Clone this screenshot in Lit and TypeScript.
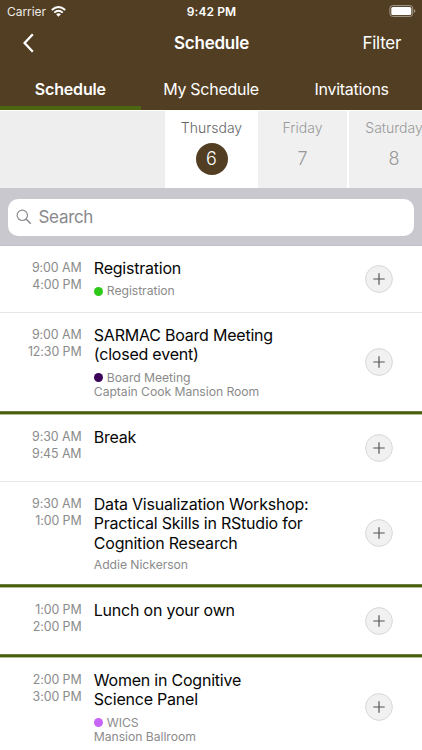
import { LitElement, html, css, nothing } from "lit";
import { customElement, property } from "lit/decorators.js";

interface Session {
  start: string;
  end: string;
  title: string[];
  color?: string;
  category?: string;
  note?: string;
  blockEnd?: boolean;
}

const SESSIONS: Session[] = [
  { start: "9:00 AM", end: "4:00 PM", title: ["Registration"], color: "#2dc81a", category: "Registration" },
  {
    start: "9:00 AM",
    end: "12:30 PM",
    title: ["SARMAC Board Meeting", "(closed event)"],
    color: "#3b0458",
    category: "Board Meeting",
    note: "Captain Cook Mansion Room",
    blockEnd: true,
  },
  { start: "9:30 AM", end: "9:45 AM", title: ["Break"] },
  {
    start: "9:30 AM",
    end: "1:00 PM",
    title: ["Data Visualization Workshop:", "Practical Skills in RStudio for", "Cognition Research"],
    note: "Addie Nickerson",
    blockEnd: true,
  },
  { start: "1:00 PM", end: "2:00 PM", title: ["Lunch on your own"], blockEnd: true },
  {
    start: "2:00 PM",
    end: "3:00 PM",
    title: ["Women in Cognitive", "Science Panel"],
    color: "#c964f8",
    category: "WICS",
    note: "Mansion Ballroom",
  },
];

@customElement("session-row")
class SessionRow extends LitElement {
  @property({ attribute: false }) session!: Session;

  static styles = css`
    :host { display: block; flex: none; }
    .row {
      display: grid;
      grid-template-columns: 81.5px 1fr 86px;
      min-height: 66px;
    }
    .rule { height: 1px; background: #e6e6e8; }
    .rule.end {
      height: 4px;
      background: linear-gradient(#6c7f3c 1px, #4a5e10 1px 3px, #b3c095 3px);
    }
    .times {
      color: #8b8b8b;
      font-size: 12.4px;
      line-height: 16.7px;
      letter-spacing: -0.08px;
      text-align: right;
      padding-top: 14px;
      white-space: nowrap;
    }
    .info { padding: 13px 0 12px 12.3px; }
    .title {
      color: #060606;
      font-size: 16px;
      line-height: 19.4px;
      letter-spacing: -0.22px;
      white-space: nowrap;
    }
    .meta {
      color: #8b8b8b;
      font-size: 12.2px;
      line-height: 13.8px;
      letter-spacing: -0.05px;
      margin-top: 5px;
      white-space: nowrap;
    }
    .meta.tagged { margin: 6px 0 0.6px; }
    .category { display: flex; align-items: center; gap: 4px; }
    .dot { width: 9px; height: 9px; border-radius: 50%; }
    .action { display: flex; align-items: center; justify-content: center; }
    .add { display: block; width: 28px; height: 28px; }
  `;

  render() {
    const s = this.session;
    return html`
      <div class="row">
        <div class="times"><div>${s.start}</div><div>${s.end}</div></div>
        <div class="info">
          <div class="title">${s.title.map((t) => html`<div>${t}</div>`)}</div>
          ${s.category || s.note
            ? html`<div class="meta ${s.category ? "tagged" : ""}">
                ${s.category
                  ? html`<div class="category"><span class="dot" style="background:${s.color}"></span><span>${s.category}</span></div>`
                  : nothing}
                ${s.note ? html`<div>${s.note}</div>` : nothing}
              </div>`
            : nothing}
        </div>
        <div class="action">
          <svg class="add" viewBox="0 0 28 28">
            <circle cx="14" cy="14" r="13.4" fill="#f1f1f1" stroke="#d8d8d8" stroke-width="1" />
            <path d="M8.3 14H19.7M14 8.3V19.7" stroke="#555" stroke-width="1.2" fill="none" />
          </svg>
        </div>
      </div>
      <div class="rule ${s.blockEnd ? "end" : ""}"></div>
    `;
  }
}

@customElement("app-root")
class AppRoot extends LitElement {
  static styles = css`
    :host {
      display: flex;
      flex-direction: column;
      width: 422px;
      height: 750px;
      overflow: hidden;
      background: #fff;
      font-family: Inter, "Liberation Sans", sans-serif;
    }
    .top { background: #523e23; color: #fff; height: 110px; flex: none; display: flex; flex-direction: column; }
    .status { height: 22px; display: grid; grid-template-columns: 1fr auto 1fr; align-items: center; padding: 0 6px 0 7px; font-size: 12px; box-sizing: border-box; }
    .carrier { display: flex; align-items: center; gap: 5px; color: #eeebe7; letter-spacing: -0.05px; }
    .wifi { width: 15px; height: 11px; }
    .clock { font-weight: 600; font-size: 12px; letter-spacing: 0.1px; }
    .battery { justify-self: end; width: 27px; height: 12px; }
    .nav { height: 42px; display: grid; grid-template-columns: 1fr auto 1fr; align-items: center; padding: 0 21px 0 22px; font-size: 17px; }
    .back { width: 13px; height: 20px; }
    .heading { font-weight: 600; letter-spacing: -0.25px; }
    .filter { justify-self: end; letter-spacing: -0.3px; }
    .tabs { flex: 1; display: grid; grid-template-columns: repeat(3, 1fr); text-align: center; font-size: 16px; letter-spacing: -0.28px; }
    .tab { line-height: 50px; border-bottom: 4px solid transparent; height: 42px; white-space: nowrap; }
    .tab.on { font-weight: 600; border-color: #4d6612; letter-spacing: -0.15px; }
    .days { height: 78px; flex: none; display: grid; grid-template-columns: 165px 93px 89px 90px; background: #fff; box-sizing: border-box; padding-top: 1px; overflow: hidden; }
    .day { background: #f0f0f0; color: #999; font-size: 14px; text-align: center; display: flex; flex-direction: column; align-items: center; }
    .day.blank { background: #eee; }
    .day.on { background: #fff; color: #666; }
    .day.later { margin-left: 2px; margin-right: -2px; }
    .name { line-height: 18px; margin-top: 8px; font-weight: 300; }
    .num { width: 32px; height: 32px; line-height: 32px; border-radius: 50%; margin-top: 6px; font-size: 18px; font-weight: 300; }
    .on .num { background: #523e23; color: #fff; }
    .search { height: 58px; flex: none; box-sizing: border-box; background: #c9c8cf; padding: 10.5px 8.5px 10.5px 8px; border-bottom: 1px solid #c0bfc6; }
    .field { height: 37px; border-radius: 10px; background: #fff; display: flex; align-items: center; gap: 6.5px; padding-left: 8px; color: #88888c; font-size: 17px; letter-spacing: -0.3px; }
    .glass { width: 16px; height: 16px; }
    .list { flex: 1; min-height: 0; overflow: hidden; display: flex; flex-direction: column; }
  `;

  render() {
    return html`
      <header class="top">
        <div class="status">
          <div class="carrier">
            <span>Carrier</span>
            <svg class="wifi" viewBox="0 0 15 11">
              <path d="M.8 4Q7.5-1.8 14.2 4" fill="none" stroke="#fff" stroke-width="1.9" />
              <path d="M3.2 6.6Q7.5 2.8 11.8 6.6" fill="none" stroke="#fff" stroke-width="1.8" />
              <path d="M5.1 8.2Q7.5 6.2 9.9 8.2L7.5 10.7Z" fill="#fff" />
            </svg>
          </div>
          <div class="clock">9:42 PM</div>
          <svg class="battery" viewBox="0 0 27 12">
            <rect x=".9" y=".6" width="22.8" height="10.8" rx="2.8" fill="none" stroke="#a69c8e" stroke-width="1" />
            <rect x="2.3" y="2" width="20" height="8" rx="1.6" fill="#fff" />
            <path d="M25 4.2Q26.4 4.7 26.4 6T25 7.8Z" fill="#a69c8e" />
          </svg>
        </div>
        <div class="nav">
          <svg class="back" viewBox="0 0 13 20"><path d="M10.8 1.2L2.6 10L10.8 18.8" fill="none" stroke="#fff" stroke-width="2.3" /></svg>
          <div class="heading">Schedule</div>
          <div class="filter">Filter</div>
        </div>
        <nav class="tabs">
          <div class="tab on">Schedule</div>
          <div class="tab">My Schedule</div>
          <div class="tab">Invitations</div>
        </nav>
      </header>
      <div class="days">
        <div class="day blank"></div>
        <div class="day on"><div class="name">Thursday</div><div class="num">6</div></div>
        <div class="day"><div class="name">Friday</div><div class="num">7</div></div>
        <div class="day later"><div class="name">Saturday</div><div class="num">8</div></div>
      </div>
      <div class="search">
        <div class="field">
          <svg class="glass" viewBox="0 0 16 16" fill="none" stroke="#8a8a8e" stroke-width="1.2">
            <circle cx="6.3" cy="6.3" r="5.2" /><path d="M10 10L14.8 14.8" stroke-width="1.5" />
          </svg>
          <span>Search</span>
        </div>
      </div>
      <main class="list">${SESSIONS.map((s) => html`<session-row .session=${s}></session-row>`)}</main>
    `;
  }
}
